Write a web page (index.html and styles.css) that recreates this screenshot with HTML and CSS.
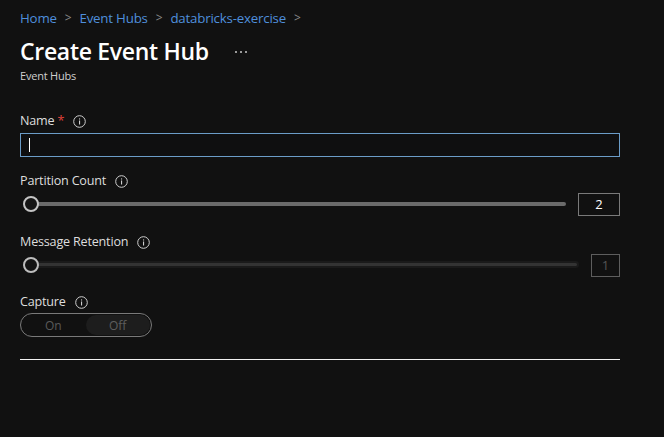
FILE: index.html
```html
<!DOCTYPE html>
<html>
<head>
<meta charset="utf-8">
<link rel="stylesheet" href="styles.css">
</head>
<body>
<div class="page">
  <nav class="crumbs">
    <a>Home</a><span class="sep">&gt;</span><a>Event Hubs</a><span class="sep">&gt;</span><a>databricks-exercise</a><span class="sep">&gt;</span>
  </nav>
  <div class="titlerow">
    <h1>Create Event Hub</h1>
    <span class="more"><i></i><i></i><i></i></span>
  </div>
  <div class="sub">Event Hubs</div>

  <div class="field f-name">
    <div class="label">Name<span class="req">*</span>
      <svg class="info" width="13" height="13" viewBox="0 0 13 13"><circle cx="6.5" cy="6.5" r="5.8" fill="none" stroke="#cfcfcf" stroke-width="1"/><rect x="6" y="5.5" width="1.1" height="4" fill="#cfcfcf"/><rect x="6" y="3.4" width="1.1" height="1.1" fill="#cfcfcf"/></svg>
    </div>
    <div class="input"><span class="caret"></span></div>
  </div>

  <div class="field f-part">
    <div class="label">Partition Count
      <svg class="info" width="13" height="13" viewBox="0 0 13 13"><circle cx="6.5" cy="6.5" r="5.8" fill="none" stroke="#cfcfcf" stroke-width="1"/><rect x="6" y="5.5" width="1.1" height="4" fill="#cfcfcf"/><rect x="6" y="3.4" width="1.1" height="1.1" fill="#cfcfcf"/></svg>
    </div>
    <div class="sliderrow">
      <div class="slider"><div class="track"></div><div class="thumb"></div></div>
      <div class="numbox">2</div>
    </div>
  </div>

  <div class="field f-ret">
    <div class="label">Message Retention
      <svg class="info" width="13" height="13" viewBox="0 0 13 13"><circle cx="6.5" cy="6.5" r="5.8" fill="none" stroke="#cfcfcf" stroke-width="1"/><rect x="6" y="5.5" width="1.1" height="4" fill="#cfcfcf"/><rect x="6" y="3.4" width="1.1" height="1.1" fill="#cfcfcf"/></svg>
    </div>
    <div class="sliderrow disabled">
      <div class="slider"><div class="track"></div><div class="thumb"></div></div>
      <div class="numbox">1</div>
    </div>
  </div>

  <div class="field f-cap">
    <div class="label">Capture
      <svg class="info" width="13" height="13" viewBox="0 0 13 13"><circle cx="6.5" cy="6.5" r="5.8" fill="none" stroke="#cfcfcf" stroke-width="1"/><rect x="6" y="5.5" width="1.1" height="4" fill="#cfcfcf"/><rect x="6" y="3.4" width="1.1" height="1.1" fill="#cfcfcf"/></svg>
    </div>
    <div class="toggle"><span class="opt">On</span><span class="opt sel">Off</span></div>
  </div>

  <div class="rule"></div>
</div>
</body>
</html>
```
FILE: styles.css
```css
html, body {
  margin: 0;
  padding: 0;
  background: #111111;
  width: 664px;
  height: 437px;
  overflow: hidden;
}
body {
  font-family: "Open Sans", "Noto Sans", "Liberation Sans", sans-serif;
  color: #e6e6e6;
}
.page {
  padding: 9px 44px 0 20px;
  display: flex;
  flex-direction: column;
}
.crumbs {
  display: flex;
  align-items: center;
  font-size: 13.3px;
  line-height: 18px;
  color: #4f8fdc;
  letter-spacing: -0.2px;
}
.crumbs a { color: #4f8fdc; }
.crumbs .sep {
  color: #8a8a8a;
  margin: 0 8px;
  font-size: 12px;
}
.titlerow {
  display: flex;
  align-items: center;
  margin-top: 9px;
  height: 30px;
}
h1 {
  margin: 0;
  font-size: 23px;
  font-weight: 600;
  color: #ffffff;
  letter-spacing: -0.3px;
  line-height: 30px;
}
.more {
  margin-left: 26px;
  display: flex;
  gap: 3px;
  margin-top: 2px;
}
.more i {
  display: block;
  width: 2px;
  height: 2px;
  border-radius: 1px;
  background: #c8c8c8;
}
.sub {
  font-size: 11px;
  color: #cfcfcf;
  line-height: 15px;
  margin-top: 2px;
  letter-spacing: -0.2px;
}
.field {
  display: flex;
  flex-direction: column;
}
.label {
  display: flex;
  align-items: center;
  font-size: 12.6px;
  line-height: 16px;
  color: #dedede;
  letter-spacing: -0.2px;
}
.label .info { margin-left: 9px; }
.req { color: #e0423a; margin-left: 3px; }
.f-name { margin-top: 30px; }
.input {
  margin-top: 4px;
  height: 22px;
  border: 1px solid #6b9cc8;
  background: #0f0f10;
  display: flex;
  align-items: center;
}
.caret {
  width: 1px;
  height: 14px;
  background: #ffffff;
  margin-left: 8px;
}
.f-part { margin-top: 16px; }
.f-ret { margin-top: 18px; }
.f-cap { margin-top: 17px; }
.sliderrow {
  display: flex;
  align-items: center;
  margin-top: 3px;
  height: 24px;
}
.slider {
  flex: 1;
  position: relative;
  height: 24px;
}
.track {
  position: absolute;
  left: 8px;
  right: 12px;
  top: 10px;
  height: 4px;
  background: #6b6b6b;
  border-radius: 2px;
}
.thumb {
  position: absolute;
  left: 3px;
  top: 4px;
  width: 12px;
  height: 12px;
  border: 2px solid #c4c4c4;
  border-radius: 50%;
  background: #141414;
}
.numbox {
  width: 40px;
  height: 21px;
  border: 1px solid #7a7a7a;
  display: flex;
  align-items: center;
  justify-content: center;
  font-size: 13px;
  color: #ffffff;
}
.disabled .track {
  background: #333333;
  right: 14px;
  height: 3px;
  top: 10px;
  box-shadow: 0 0 0 2px #1a1a1a;
}
.disabled .thumb {
  border-color: #bdbdbd;
}
.disabled .numbox {
  width: 27px;
  border-color: #5e5e5e;
  color: #555555;
}
.toggle {
  margin-top: 3px;
  width: 130px;
  height: 22px;
  border: 1px solid #7a7a7a;
  border-radius: 12px;
  display: flex;
  padding: 0;
  overflow: hidden;
}
.opt {
  flex: 1;
  display: flex;
  align-items: center;
  justify-content: center;
  font-size: 12px;
  color: #5a5a5a;
}
.toggle .sel {
  background: #1d1d1d;
  border-radius: 12px;
  margin: 1px 1px 1px 0;
  color: #5e5e5e;
}
.rule {
  margin-top: 22px;
  height: 1px;
  background: #f2f2f2;
}
```
